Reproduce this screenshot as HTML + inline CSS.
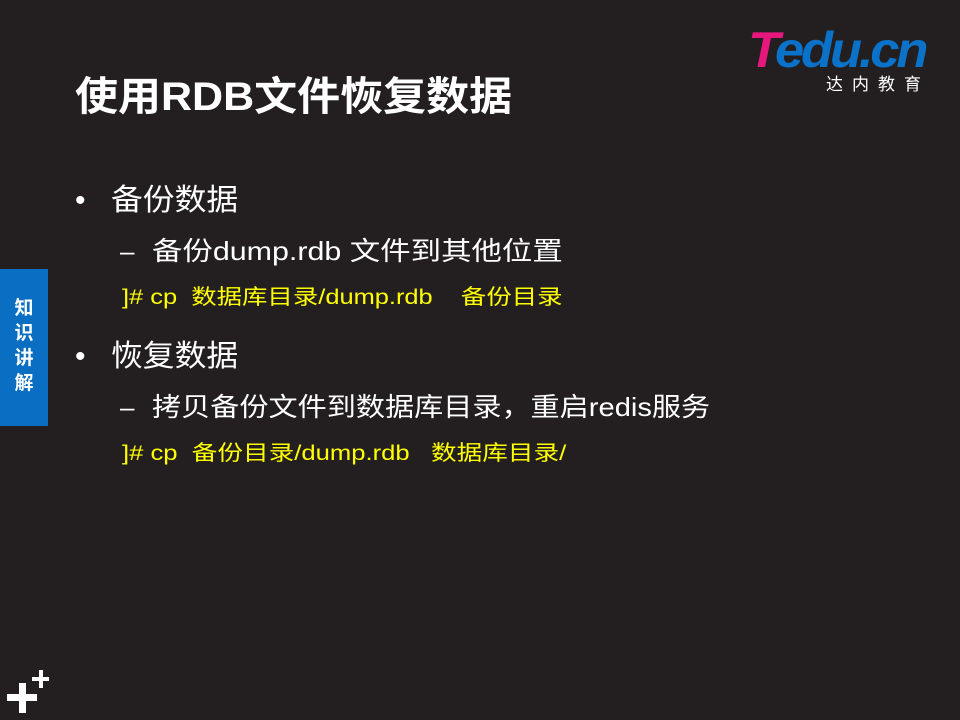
<!DOCTYPE html>
<html><head><meta charset="utf-8"><style>
body{margin:0;width:960px;height:720px;background:#231f20;position:relative;overflow:hidden;font-family:"Liberation Sans","Noto Sans CJK SC",sans-serif;color:#fff}
.a{position:absolute;white-space:nowrap;transform-origin:left center}
</style></head><body>
<div class="a" style="left:75px;top:72px;font-size:40px;font-weight:bold;line-height:50px;transform:scaleX(1.075)">使用RDB文件恢复数据</div>
<div class="a" style="left:748px;top:24px;font-size:50px;font-weight:bold;font-style:italic;letter-spacing:-3px;line-height:52px;color:#0a72c8;transform:scaleX(1.05)"><span style="color:#e8177e">T</span>edu.cn</div>
<div class="a" style="left:826px;top:74px;font-size:17px;letter-spacing:9px;line-height:22px">达内教育</div>
<div class="a" style="left:0;top:269px;width:48px;height:157px;background:#0a6fc2"></div>
<div class="a" style="left:12px;top:296px;width:24px;font-size:19px;font-weight:bold;line-height:25px;white-space:normal;text-align:center">知识讲解</div>
<div class="a" style="left:75px;top:182px;font-size:30px;line-height:38px">•&nbsp;&nbsp;&nbsp;<span style="display:inline-block;transform:scaleX(1.06);transform-origin:left">备份数据</span></div>
<div class="a" style="left:120px;top:234px;font-size:26px;line-height:34px">–</div>
<div class="a" style="left:152px;top:234px;font-size:26px;line-height:34px;transform:scaleX(1.17)">备份dump.rdb 文件到其他位置</div>
<div class="a" style="left:122px;top:284px;font-size:21px;line-height:28px;color:#ffff00;transform:scaleX(1.21)">]# cp&nbsp;&nbsp;数据库目录/dump.rdb&nbsp;&nbsp;&nbsp;&nbsp;备份目录</div>
<div class="a" style="left:75px;top:338px;font-size:30px;line-height:38px">•&nbsp;&nbsp;&nbsp;<span style="display:inline-block;transform:scaleX(1.06);transform-origin:left">恢复数据</span></div>
<div class="a" style="left:120px;top:390px;font-size:26px;line-height:34px">–</div>
<div class="a" style="left:152px;top:390px;font-size:26px;line-height:34px;transform:scaleX(1.12)">拷贝备份文件到数据库目录，重启redis服务</div>
<div class="a" style="left:122px;top:440px;font-size:21px;line-height:28px;color:#ffff00;transform:scaleX(1.22)">]# cp&nbsp;&nbsp;备份目录/dump.rdb&nbsp;&nbsp;&nbsp;数据库目录/</div>
<div class="a" style="left:7px;top:694px;width:30px;height:7px;background:#fff"></div>
<div class="a" style="left:19px;top:683px;width:7px;height:30px;background:#fff"></div>
<div class="a" style="left:32px;top:677px;width:17px;height:4px;background:#fff"></div>
<div class="a" style="left:39px;top:670px;width:4px;height:18px;background:#fff"></div>
</body></html>
